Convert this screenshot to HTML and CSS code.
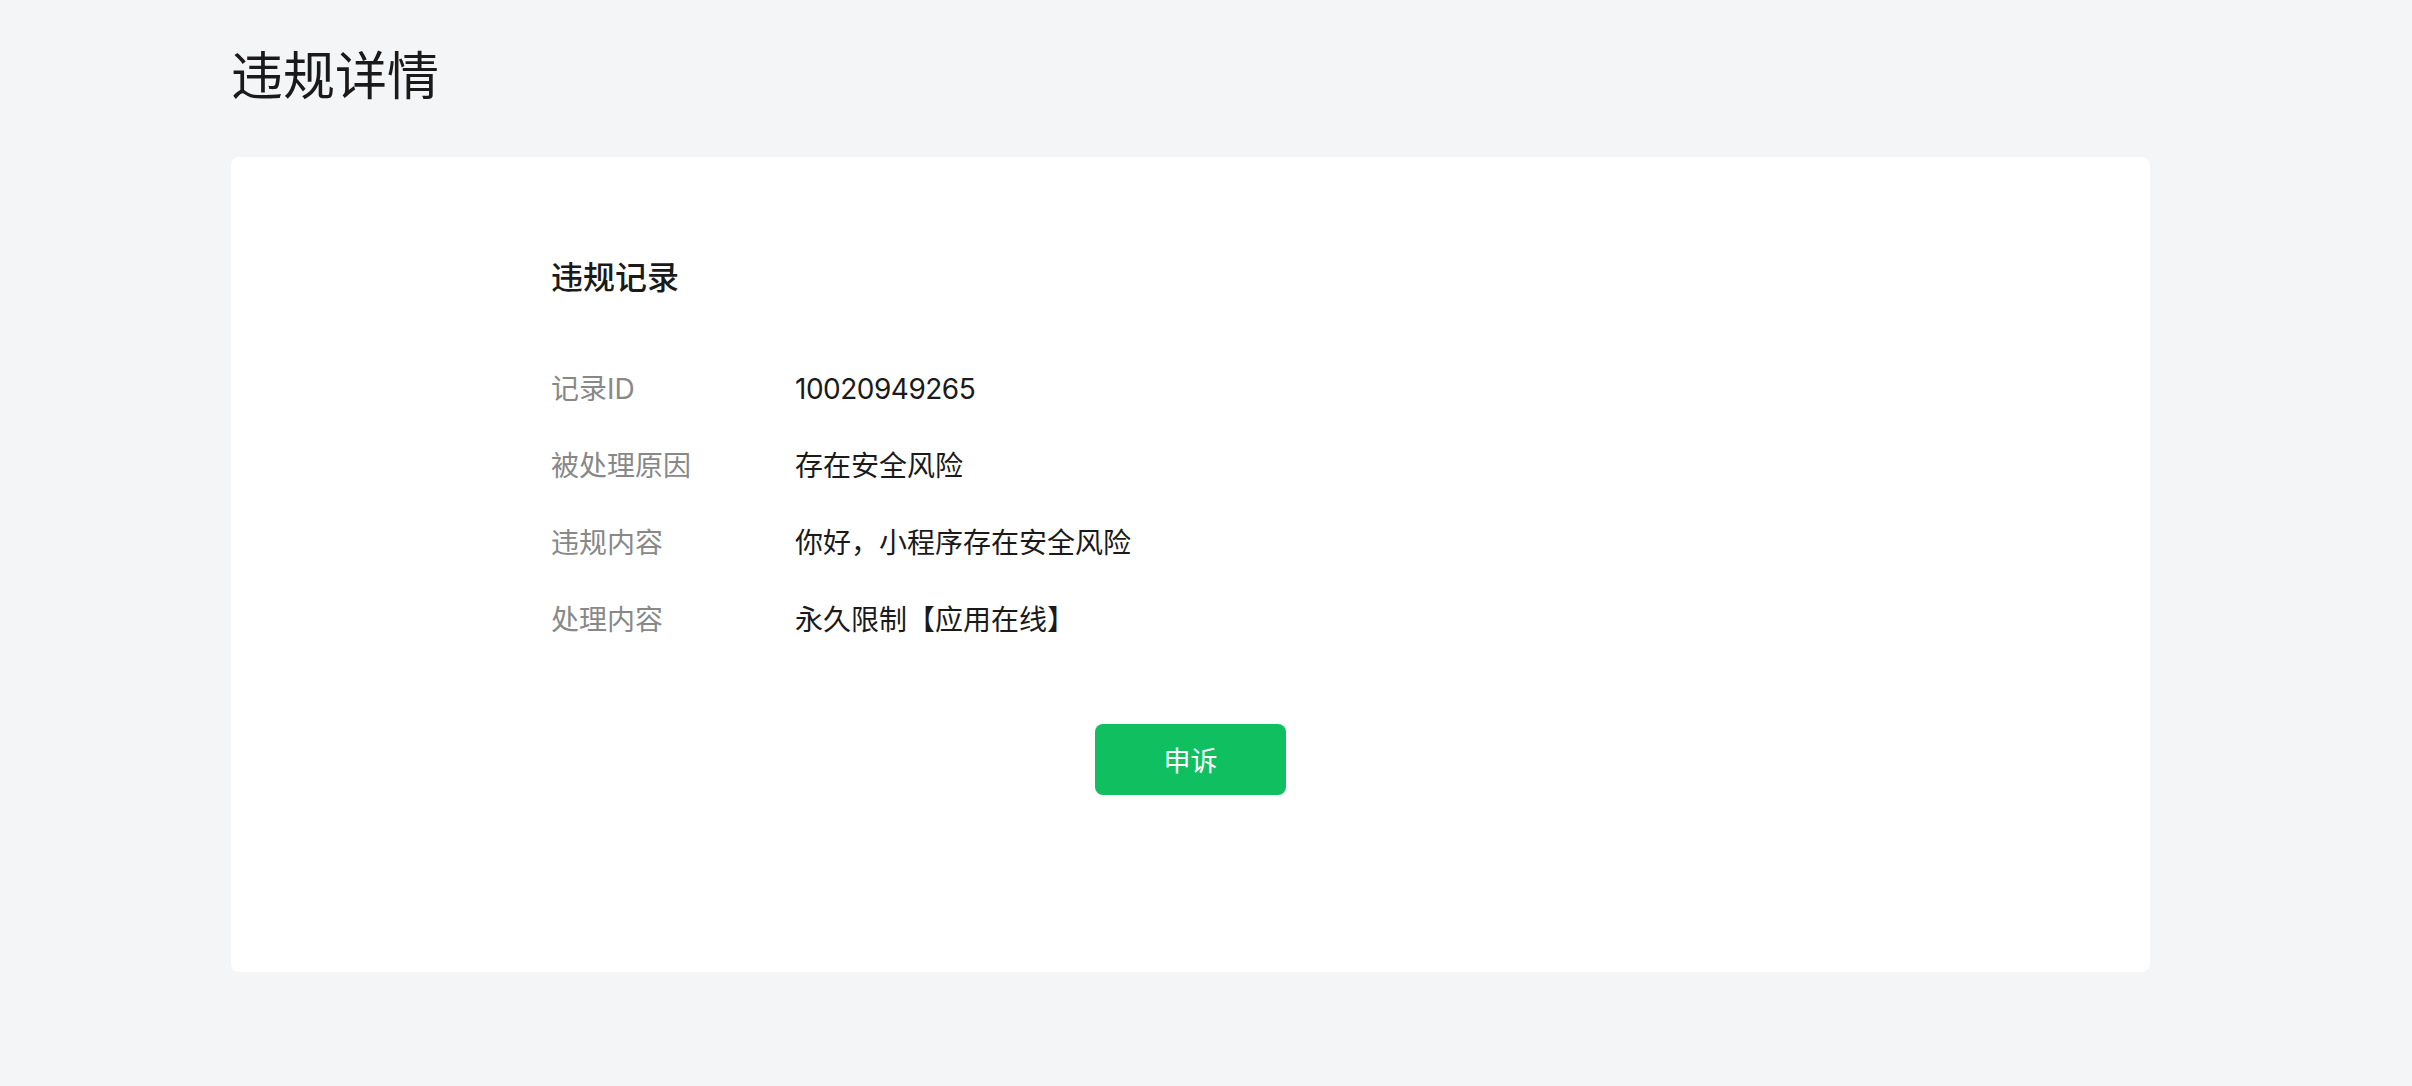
FILE: index.html
```html
<!DOCTYPE html>
<html lang="zh-CN">
<head>
    <meta charset="UTF-8">
    <meta name="viewport" content="width=device-width, initial-scale=1.0">
    <title>违规详情</title>
    <link rel="stylesheet" href="styles.css">
</head>
<body>
    <div class="page">
        <h1 class="page-title">违规详情</h1>
        <div class="card">
            <div class="record">
                <h2 class="record-title">违规记录</h2>
                <div class="record-list">
                    <div class="record-row">
                        <span class="record-label">记录ID</span>
                        <span class="record-value record-id">10020949265</span>
                    </div>
                    <div class="record-row">
                        <span class="record-label">被处理原因</span>
                        <span class="record-value">存在安全风险</span>
                    </div>
                    <div class="record-row">
                        <span class="record-label">违规内容</span>
                        <span class="record-value">你好，小程序存在安全风险</span>
                    </div>
                    <div class="record-row">
                        <span class="record-label">处理内容</span>
                        <span class="record-value">永久限制【应用在线】</span>
                    </div>
                </div>
            </div>
            <div class="actions">
                <button class="appeal-btn">申诉</button>
            </div>
        </div>
    </div>
</body>
</html>
```

FILE: styles.css
```css
body {
    margin: 0;
    padding: 0;
    background: #f4f5f7;
    color: #1a1a1a;
    font-family: "Inter", "Noto Sans CJK SC", sans-serif;
}
.page {
    width: 1919px;
    padding: 41px 0 114px 231px;
}
.page-title {
    margin: 0 0 44px;
    font-size: 52px;
    line-height: 72px;
    font-weight: 400;
    color: #1a1a1a;
}
.card {
    background: #fff;
    border-radius: 8px;
    padding: 99px 0 177px;
}
.record {
    padding-left: 320px;
}
.record-title {
    margin: 0 0 67px;
    font-size: 32px;
    line-height: 44px;
    font-weight: 500;
}
.record-list {
    display: flex;
    flex-direction: column;
    gap: 33px;
}
.record-row {
    display: flex;
    font-size: 28px;
    line-height: 44px;
}
.record-label {
    width: 244px;
    flex-shrink: 0;
    color: #888;
}
.record-value {
    color: #1a1a1a;
}
.record-id {
    letter-spacing: -0.5px;
}
.actions {
    display: flex;
    justify-content: center;
    margin-top: 82px;
}
.appeal-btn {
    width: 191px;
    height: 71px;
    border: none;
    border-radius: 8px;
    background: #10c060;
    color: #fff;
    font-family: inherit;
    font-size: 27px;
    cursor: pointer;
}
```
